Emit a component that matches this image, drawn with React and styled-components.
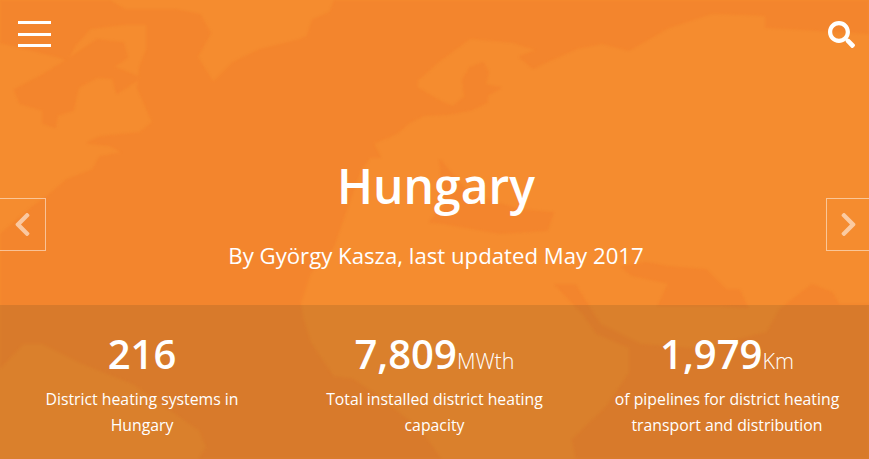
import React from 'react';
import styled, { createGlobalStyle } from 'styled-components';
import { FaChevronLeft, FaChevronRight, FaSearch } from 'react-icons/fa';

const GlobalStyle = createGlobalStyle`
  html, body {
    margin: 0;
    padding: 0;
    background: #f58c2f;
    overflow: hidden;
  }
`;

const Page = styled.div`
  position: relative;
  width: 869px;
  height: 459px;
  overflow: hidden;
  background: #f58c2f;
  color: #fff;
  font-family: 'Open Sans', 'Noto Sans', sans-serif;
`;

const MapArt = styled.svg`
  position: absolute;
  inset: 0;
  width: 100%;
  height: 100%;
  filter: blur(1.2px);
`;

const Content = styled.div`
  position: relative;
  display: flex;
  flex-direction: column;
  height: 100%;
`;

const Hero = styled.section`
  height: 305px;
  display: flex;
  flex-direction: column;
`;

const TopBar = styled.header`
  display: flex;
  justify-content: space-between;
  align-items: flex-start;
  padding: 21px 14px 0 18px;
  height: 129px;
`;

const Burger = styled.div`
  display: flex;
  flex-direction: column;
  gap: 8.5px;
  width: 33px;
`;

const BurgerBar = styled.span`
  display: block;
  height: 3px;
  background: #fff;
`;

const SearchButton = styled.div`
  font-size: 27px;
  line-height: 0;
`;

const Banner = styled.div`
  display: grid;
  grid-template-columns: 46px 1fr 43px;
  align-items: center;
  height: 155px;
`;

const Arrow = styled.div`
  height: 53px;
  box-sizing: border-box;
  display: flex;
  align-items: center;
  justify-content: center;
  border: 1px solid rgba(255, 255, 255, 0.5);
  border-${({ $side }) => $side}: 0;
  color: rgba(255, 255, 255, 0.55);
  font-size: 27px;
  margin-top: -7px;
`;

const Heading = styled.div`
  text-align: center;
  margin-top: -31px;
`;

const Title = styled.h1`
  margin: 0;
  font-size: 48px;
  line-height: 64px;
  font-weight: 600;
`;

const Byline = styled.p`
  margin: 23px 0 0;
  font-size: 22.2px;
  line-height: 30px;
  font-weight: 400;
`;

const StatsPanel = styled.section`
  flex: 1;
  display: grid;
  grid-template-columns: repeat(3, 292.5px);
  justify-content: center;
  background: rgba(109, 78, 35, 0.2);
`;

const Stat = styled.div`
  display: flex;
  flex-direction: column;
  align-items: center;
  padding-top: 22px;
  text-align: center;
`;

const Figure = styled.div`
  height: 54px;
  font-size: 40px;
  line-height: 54px;
  font-weight: 600;
`;

const Unit = styled.span`
  font-size: 21.5px;
  line-height: 0;
  font-weight: 300;
`;

const Caption = styled.p`
  margin: 5px 0 0;
  max-width: 240px;
  font-size: 15.8px;
  line-height: 26px;
`;

const stats = [
  { value: '216', caption: 'District heating systems in Hungary' },
  { value: '7,809', unit: 'MWth', caption: 'Total installed district heating capacity' },
  { value: '1,979', unit: 'Km', caption: 'of pipelines for district heating transport and distribution' },
];

function WorldMap() {
  return (
    <MapArt viewBox="0 0 869 459" aria-hidden="true">
      <g fill="#f3852d" stroke="#f3852d" strokeWidth="2" strokeLinejoin="round">
        <path d="M147 10 L175 10 L200 15 L210 33 L197 57 L213 83 L233 63 L260 50 L300 40 L307 37 L313 20 L330 13 L335 0 L869 0 L869 33 L819 30 L766 27 L766 15 L712 13 L669 27 L629 50 L602 43 L577 48 L543 63 L533 68 L520 57 L538 50 L513 42 L470 38 L440 60 L417 80 L417 88 L443 103 L453 107 L465 97 L463 80 L470 68 L483 63 L488 72 L485 85 L500 88 L487 95 L487 102 L470 110 L447 114 L423 115 L408 123 L397 133 L373 143 L380 157 L370 157 L360 170 L340 227 L333 247 L310 273 L300 303 L302 317 L310 343 L333 377 L353 380 L375 395 L420 430 L440 459 L200 459 L207 447 L200 430 L133 383 L83 363 L43 343 L23 343 L0 367 L0 235 L33 207 L47 197 L67 180 L93 170 L100 157 L123 153 L110 145 L88 143 L100 137 L140 133 L153 122 L138 88 L140 67 L147 50 Z" />
        <path d="M0 0 L108 0 L125 10 L147 10 L147 24 L125 24 L90 28 L75 45 L67 60 L60 57 L33 50 L0 42 Z" />
        <path d="M15 90 L43 75 L67 60 L97 40 L123 43 L127 57 L113 67 L140 78 L117 93 L113 78 L97 77 L78 87 L73 110 L57 115 L55 127 L43 123 L43 110 L20 103 Z" />
        <path d="M440 160 L452 175 L470 195 L520 210 L553 213 L547 230 L500 233 L443 223 L430 222 L445 205 Z" />
        <path d="M622 267 L646 263 L669 267 L706 270 L726 290 L739 290 L747 307 L720 305 L659 305 L669 283 L632 275 Z" />
        <path d="M556 285 L575 285 L600 325 L640 345 L700 350 L767 333 L773 323 L780 310 L786 305 L812 285 L832 293 L839 305 L869 305 L869 459 L577 459 L573 440 L607 407 L630 373 L630 347 L597 333 L583 313 Z" />
      </g>
    </MapArt>
  );
}

function App() {
  return (
    <Page>
      <GlobalStyle />
      <WorldMap />
      <Content>
        <Hero>
          <TopBar>
            <Burger>
              <BurgerBar />
              <BurgerBar />
              <BurgerBar />
            </Burger>
            <SearchButton>
              <FaSearch />
            </SearchButton>
          </TopBar>
          <Banner>
            <Arrow $side="left">
              <FaChevronLeft />
            </Arrow>
            <Heading>
              <Title>Hungary</Title>
              <Byline>By György Kasza, last updated May 2017</Byline>
            </Heading>
            <Arrow $side="right">
              <FaChevronRight />
            </Arrow>
          </Banner>
        </Hero>
        <StatsPanel>
          {stats.map((stat) => (
            <Stat key={stat.value}>
              <Figure>
                {stat.value}
                {stat.unit && <Unit>{stat.unit}</Unit>}
              </Figure>
              <Caption>{stat.caption}</Caption>
            </Stat>
          ))}
        </StatsPanel>
      </Content>
    </Page>
  );
}

export default App;
